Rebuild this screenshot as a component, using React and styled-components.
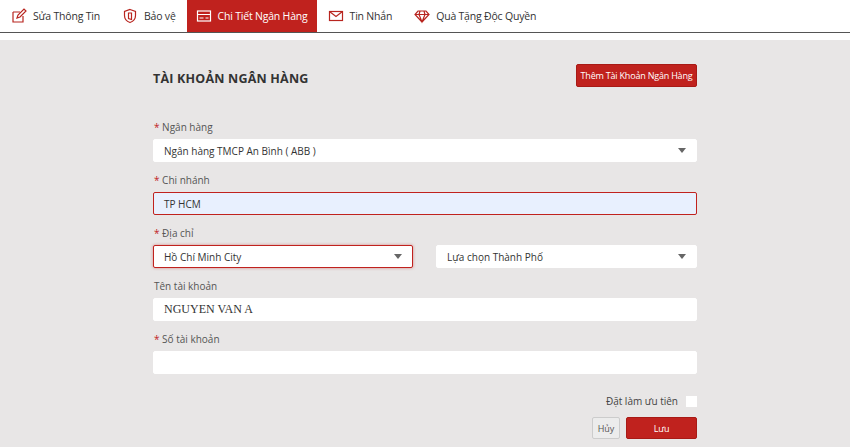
import React from "react";
import styled, { createGlobalStyle } from "styled-components";

const Global = createGlobalStyle`
  html, body { margin: 0; padding: 0; background: #e8e6e6; font-family: "Open Sans", "Noto Sans", sans-serif; }
  * { box-sizing: border-box; }
`;

const Page = styled.div` width: 850px; height: 447px; overflow: hidden; background: #e8e6e6; `;
const Nav = styled.div`
  display: flex; align-items: stretch; height: 33px; background: #fff;
  border-bottom: 1px solid #555; padding-left: 0;
`;
const Tab = styled.div`
  display: flex; align-items: center; gap: 6px; padding: 0 ${p => (p.$active ? 9 : 11)}px;
  margin-right: ${p => (p.$active ? 0 : 0)}px;
  font-size: 10.5px; letter-spacing: -0.2px; color: ${p => (p.$active ? "#fff" : "#b8251f")};
  background: ${p => (p.$active ? "#c0221e" : "transparent")};
  span { color: ${p => (p.$active ? "#fff" : "#333")}; }
`;
const Gap = styled.div` height: 7px; background: #fff; `;
const Content = styled.div` width: 544px; margin: 0 0 0 153px; padding-top: 24px; `;
const Head = styled.div` display: flex; justify-content: space-between; align-items: center; height: 23px; margin-bottom: 34px; `;
const Title = styled.h2` margin: 5px 0 0; font-size: 12.5px; font-weight: 700; color: #333; letter-spacing: 0.2px; `;
const RedBtn = styled.button`
  border: 1px solid #a81a16; background: #c0221e; color: #fff; border-radius: 2px;
  font-family: inherit; font-size: 9px; letter-spacing: -0.2px; height: ${p => p.$h || 23}px; width: ${p => p.$w}px; padding: 0;
`;
const GreyBtn = styled.button`
  border: 1px solid #ccc; background: #ececec; color: #555; border-radius: 2px;
  font-family: inherit; font-size: 9px; height: 22px; width: 28px; padding: 0;
`;
const Label = styled.div`
  font-size: 10px; color: #555; height: 12px; line-height: 12px; margin: 0 0 6px 1px;
  b { color: #c0221e; font-weight: 400; }
`;
const Field = styled.div`
  display: flex; align-items: center; justify-content: space-between;
  height: 23px; background: ${p => (p.$focus ? "#e8f0fe" : "#fff")};
  border: 1px solid ${p => (p.$red ? "#c0221e" : "#fff")};
  border-radius: 2px; padding: 0 10px; color: #333; margin-bottom: 12px;
  box-shadow: ${p => (p.$glow ? "0 0 3px rgba(192,34,30,0.5)" : "none")};
  font-family: ${p => (p.$serif ? '"Liberation Serif", serif' : "inherit")};
  font-size: ${p => (p.$serif ? 12 : 10)}px;
`;
const Caret = styled.i` border: 4px solid transparent; border-top: 5px solid #666; border-bottom: 0; `;
const Row2 = styled.div` display: grid; grid-template-columns: 260px 261px; gap: 23px; `;
const CheckRow = styled.div` display: flex; justify-content: flex-end; align-items: center; gap: 8px; font-size: 10px; color: #444; margin-top: 20px; `;
const Box = styled.div` width: 11px; height: 11px; background: #fff; `;
const Buttons = styled.div` display: flex; justify-content: flex-end; gap: 6px; margin-top: 9px; `;
const Rule = styled.div` height: 1px; background: #ccc; margin-top: 11px; `;

const Ic = ({ children }) => (
  <svg width="16" height="16" viewBox="0 0 16 16" fill="none" stroke="currentColor" strokeWidth="1.2">{children}</svg>
);

export default function App() {
  return (
    <Page>
      <Global />
      <Nav>
        <Tab><Ic><path d="M2 4h7M2 4v10h10V8" /><path d="M6 10l1-3 6-6 2 2-6 6z" /></Ic><span>Sửa Thông Tin</span></Tab>
        <Tab><Ic><path d="M8 1.5l5.5 2v4c0 3.5-2.5 6-5.5 7-3-1-5.5-3.5-5.5-7v-4z" /><path d="M6.5 5v5.5l3 1V5z" /></Ic><span>Bảo vệ</span></Tab>
        <Tab $active><Ic><rect x="1.5" y="3" width="13" height="10" /><path d="M1.5 6.5h13M3.5 10h4M9.5 10h3" /></Ic><span>Chi Tiết Ngân Hàng</span></Tab>
        <Tab><Ic><rect x="1.5" y="3.5" width="13" height="9" /><path d="M1.5 3.5l6.5 5 6.5-5" /></Ic><span>Tin Nhắn</span></Tab>
        <Tab><Ic><path d="M4 3h8l3 3.5L8 14 1 6.5z M1 6.5h14 M6 3l-1 3.5L8 14l3-7.5L10 3" /></Ic><span>Quà Tặng Độc Quyền</span></Tab>
      </Nav>
      <Gap />
      <Content>
        <Head>
          <Title>TÀI KHOẢN NGÂN HÀNG</Title>
          <RedBtn $w={121}>Thêm Tài Khoản Ngân Hàng</RedBtn>
        </Head>
        <Label><b>*</b> Ngân hàng</Label>
        <Field>Ngân hàng TMCP An Bình ( ABB )<Caret /></Field>
        <Label><b>*</b> Chi nhánh</Label>
        <Field $focus $red>TP HCM</Field>
        <Label><b>*</b> Địa chỉ</Label>
        <Row2>
          <Field $red $glow>Hồ Chí Minh City<Caret /></Field>
          <Field>Lựa chọn Thành Phố<Caret /></Field>
        </Row2>
        <Label>Tên tài khoản</Label>
        <Field $serif>NGUYEN VAN A</Field>
        <Label><b>*</b> Số tài khoản</Label>
        <Field />
        <CheckRow>Đặt làm ưu tiên<Box /></CheckRow>
        <Buttons>
          <GreyBtn>Hủy</GreyBtn>
          <RedBtn $w={71} $h={22}>Lưu</RedBtn>
        </Buttons>
        <Rule />
      </Content>
    </Page>
  );
}
